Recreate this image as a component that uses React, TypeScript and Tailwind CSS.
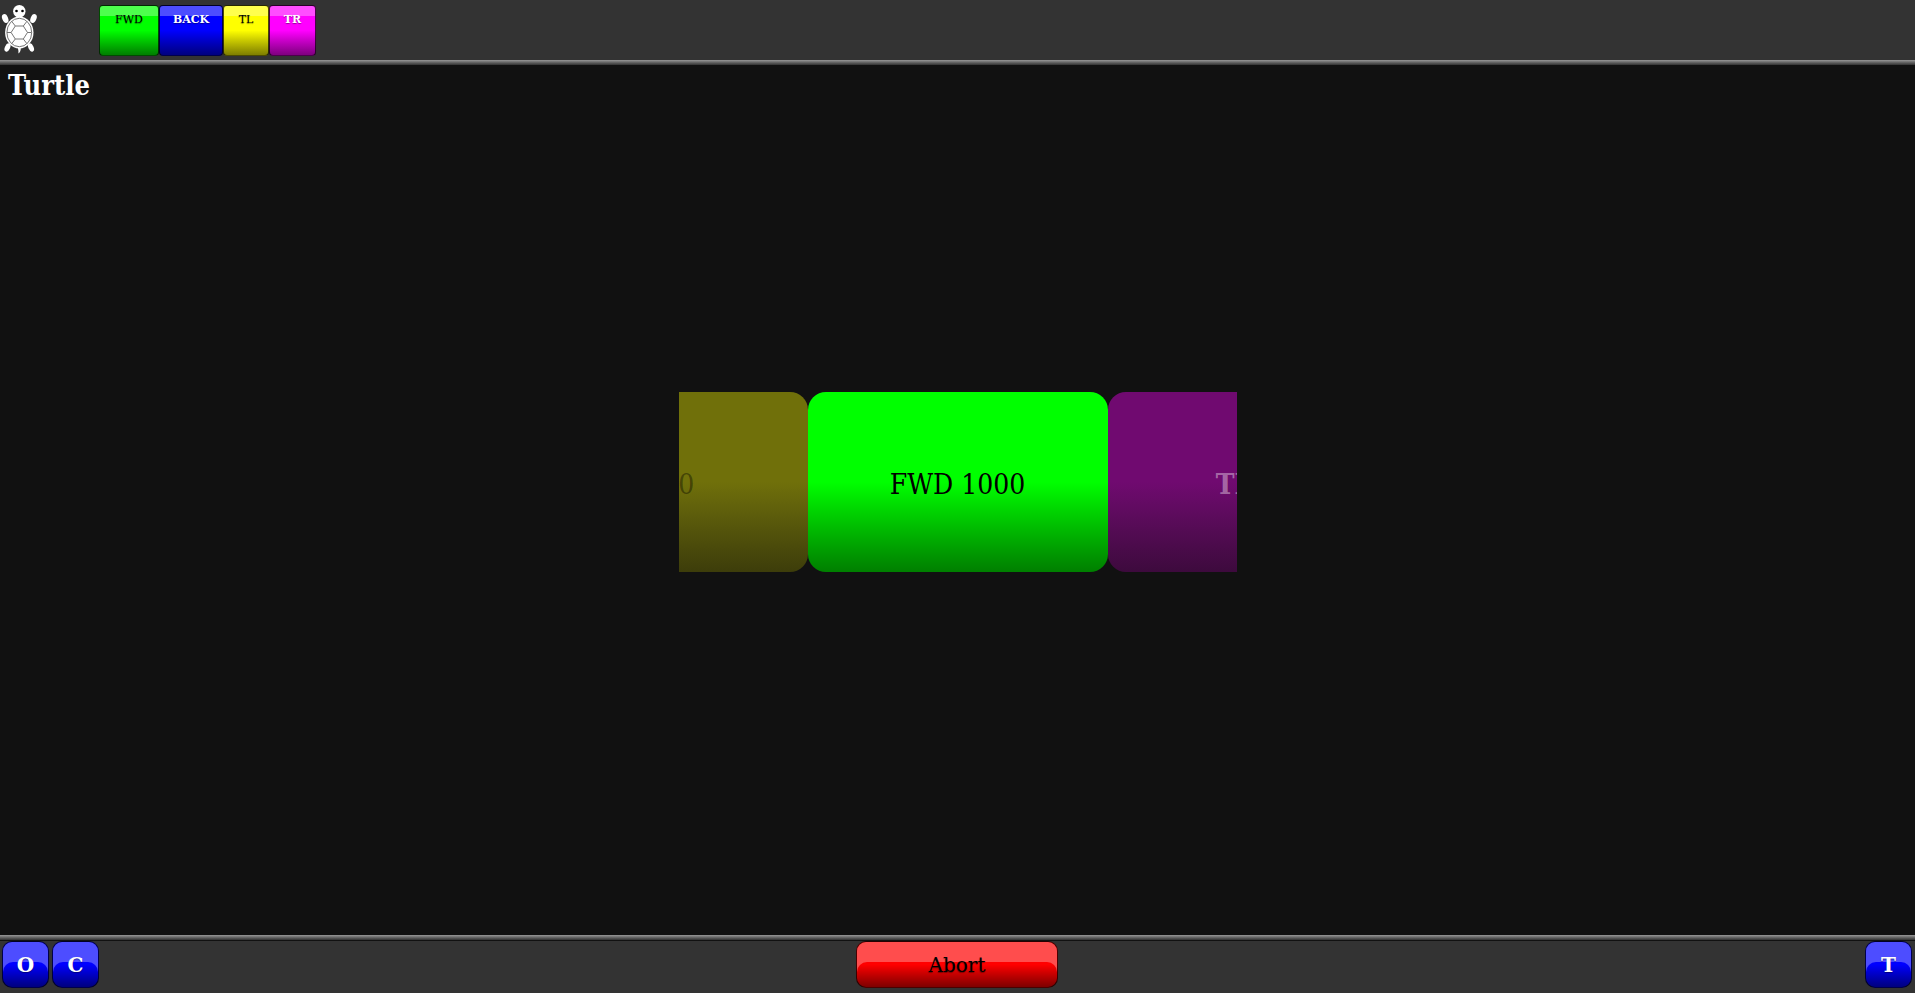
import React from "react";

const condensed = "font-['DejaVu_Serif_Condensed','DejaVu_Serif',serif]";
const wide = "font-['DejaVu_Serif',serif]";

const green = "bg-linear-to-b from-[#00ff00] from-50% to-[#007f00] text-black";
const blue = "bg-linear-to-b from-[#0000ff] from-50% to-[#00007f] text-white font-bold";
const yellow = "bg-linear-to-b from-[#ffff00] from-50% to-[#7f7f00] text-black";
const magenta = "bg-linear-to-b from-[#ff00ff] from-50% to-[#7f007f] text-white font-bold";
const red = "bg-linear-to-b from-[#ff0000] from-50% to-[#7f0000] text-black";
const fadedYellow = "bg-linear-to-b from-[#70700a] from-50% to-[#3d3d0a] text-black/40";
const fadedMagenta = "bg-linear-to-b from-[#700a70] from-50% to-[#3d0a3d] text-white/40 font-bold";

function TurtleIcon() {
  return (
    <svg viewBox="0 0 38 54" className="h-[54px] w-[38px]" aria-hidden="true">
      <g fill="#fff">
        <ellipse cx="19.3" cy="11.3" rx="6.200" ry="6.300" />
        <ellipse cx="5.200" cy="18.500" rx="2.900" ry="4.700" transform="rotate(-22 5.200 18.500)" />
        <ellipse cx="33.500" cy="18.500" rx="2.900" ry="4.700" transform="rotate(22 33.500 18.500)" />
        <ellipse cx="7.500" cy="47.500" rx="2.600" ry="4.300" transform="rotate(25 7.500 47.500)" />
        <ellipse cx="31" cy="47.500" rx="2.600" ry="4.300" transform="rotate(-25 31 47.500)" />
        <path d="M17.500 47h3.200c.3 3-.4 5.600-2.400 6.600.5-2-.1-4.500-.8-6.600z" />
        <ellipse cx="19.300" cy="32.500" rx="14.200" ry="16" />
      </g>
      <g fill="none" stroke="#666" strokeWidth="0.900">
        <ellipse cx="19.300" cy="32.500" rx="12.400" ry="14.200" />
        <path d="M15.300 26h8l4.200 6.500-4.200 6.500h-8l-4.200-6.500zM15.300 26l-3.500-4.500M23.300 26l3.500-4.500M27.500 32.500h4M23.300 39l3.500 4.500M15.300 39l-3.500 4.500M11.100 32.500H7" />
      </g>
      <circle cx="16.500" cy="11" r="1.300" fill="#000" />
      <circle cx="22.500" cy="11" r="1.300" fill="#000" />
    </svg>
  );
}

function ToolButton({ label, tone }: { label: string; tone: string }) {
  return (
    <button
      type="button"
      className={`relative flex h-[51px] justify-center overflow-hidden rounded-[4px] border border-black/70 pt-1 ${wide} ${tone}`}
    >
      <span className="absolute inset-x-0 top-0 h-[10px] bg-white/30" />
      <span className="relative text-[11px] leading-5 text-shadow-[0_1px_1px_rgb(0_0_0/0.4)]">{label}</span>
    </button>
  );
}

function BarButton({ label, tone }: { label: string; tone: string }) {
  return (
    <button
      type="button"
      className={`relative flex h-[47px] items-center justify-center overflow-hidden rounded-[10px] border border-black/70 text-[20px] leading-6 ${wide} ${tone}`}
    >
      <span className="absolute inset-x-0 top-5 -bottom-3 rounded-[10px] shadow-[0_0_0_40px_rgb(255_255_255/0.3)]" />
      <span className="relative text-shadow-[0_1px_1px_rgb(0_0_0/0.4)]">{label}</span>
    </button>
  );
}

function Card({ label, tone }: { label: string; tone: string }) {
  return (
    <button
      type="button"
      className={`flex h-[180px] w-[300px] shrink-0 items-center justify-center rounded-[18px] pt-[6px] text-[28px] leading-8 ${tone}`}
    >
      {label}
    </button>
  );
}

export default function App() {
  return (
    <div className={`flex h-screen flex-col overflow-hidden bg-[#111] ${condensed}`}>
      <header className="shrink-0 bg-[#333]">
        <div className="flex h-[60px]">
          <div className="w-[99px]">
            <TurtleIcon />
          </div>
          <nav className="grid grid-cols-[60px_64px_46px_47px] pt-[5px]">
            <ToolButton label="FWD" tone={green} />
            <ToolButton label="BACK" tone={blue} />
            <ToolButton label="TL" tone={yellow} />
            <ToolButton label="TR" tone={magenta} />
          </nav>
        </div>
        <div className="h-[5px] bg-linear-to-b from-[#999] to-[#333]" />
      </header>

      <main className="flex grow flex-col">
        <h1 className="px-2 pt-[3px] text-[27px] leading-9 font-bold text-white">Turtle</h1>
        <section aria-label="Commands" className="flex grow items-center justify-center pb-[75px]">
          <div className="flex w-[558px] justify-center overflow-hidden">
            <Card label="TL 90" tone={fadedYellow} />
            <Card label="FWD 1000" tone={green} />
            <Card label="TR 90" tone={fadedMagenta} />
          </div>
        </section>
      </main>

      <footer className="shrink-0 bg-[#333]">
        <div className="h-[5px] bg-linear-to-b from-[#999] to-[#333]" />
        <div className="grid h-[53px] grid-cols-[1fr_202px_1fr] items-start border-t border-[#111] pr-[3px] pl-[2px]">
          <div className="grid grid-cols-[47px_47px] gap-[3px]">
            <BarButton label="O" tone={blue} />
            <BarButton label="C" tone={blue} />
          </div>
          <BarButton label="Abort" tone={red} />
          <div className="grid grid-cols-[47px] justify-end">
            <BarButton label="T" tone={blue} />
          </div>
        </div>
      </footer>
    </div>
  );
}
